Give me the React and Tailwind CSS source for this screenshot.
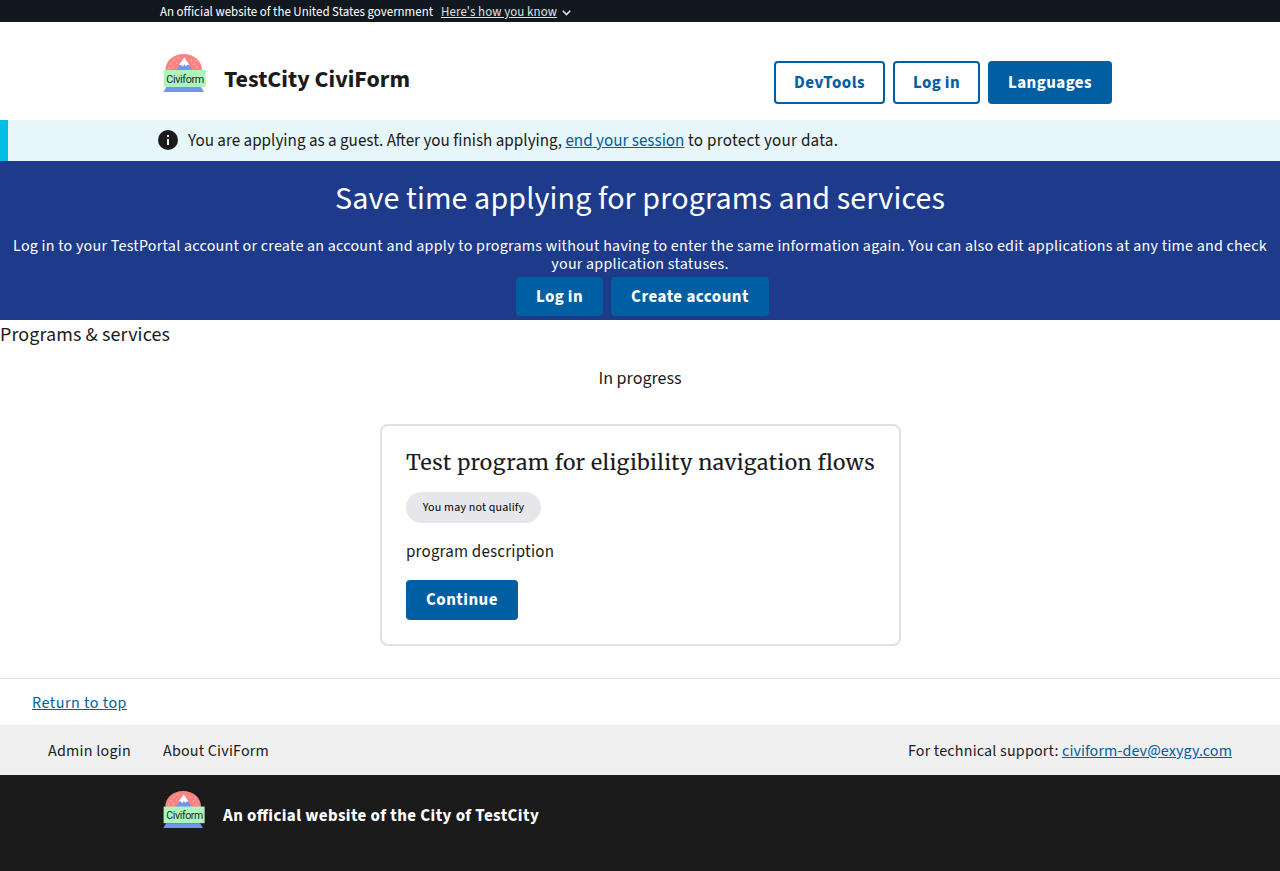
function Logo({ className }) {
  return (
    <svg className={className} viewBox="6 12 138 126" aria-hidden="true">
      <path d="M22 68C22 38 46 18 77 18s55 20 55 50z" fill="#fb8383" />
      <g fill="#fcc5c5">
        <circle cx="48" cy="37" r="2.2" />
        <circle cx="57" cy="46" r="2.2" />
        <circle cx="39" cy="48" r="2.2" />
        <circle cx="46" cy="58" r="2.2" />
        <circle cx="100" cy="37" r="2.2" />
        <circle cx="109" cy="48" r="2.2" />
        <circle cx="115" cy="38" r="2.2" />
        <circle cx="117" cy="58" r="2.2" />
        <circle cx="33" cy="60" r="2.2" />
        <circle cx="62" cy="30" r="2.2" />
      </g>
      <path d="M54 68 79 29l25 39z" fill="#7295f4" />
      <path d="M79 28 63 51l6-1 5 6 5-7 5 6 4-5 6 1z" fill="#fff" />
      <path d="M25 117h104l9 15H16z" fill="#7295f4" />
      <rect x="17" y="66" width="126" height="51" fill="#adf5bd" />
      <text x="25" y="103.5" textLength="114" fontFamily="Roboto, Inter, sans-serif" fontSize="32.5" fill="#1c2a20">
        Civiform
      </text>
    </svg>
  );
}

const solid = "rounded bg-[#005ea2] text-center text-[16.96px] font-bold leading-none text-white";
const outline = "rounded border-2 border-[#005ea2] pt-0.5 text-center text-[16.96px] font-bold leading-none text-[#005ea2]";

function Banner() {
  return (
    <div className="flex h-[22px] items-center bg-[#11181f] pl-40 pt-0.5 text-[12.86px] leading-4 text-white">
      <span className="w-[281px] whitespace-nowrap">An official website of the United States government</span>
      <a href="#" className="whitespace-nowrap text-[#dfe1e2] underline tracking-[0.1px]">Here's how you know</a>
      <svg className="ml-[5px] mt-px h-[6px] w-[9px]" viewBox="0 0 9 6" fill="none" stroke="#dfe1e2" strokeWidth="1.6">
        <path d="m.8.8 3.7 3.7L8.2.8" />
      </svg>
    </div>
  );
}

function Header() {
  return (
    <header className="flex h-[98px] items-start pl-40 pr-[168px]">
      <Logo className="mt-[30px] h-[42px] w-[46px]" />
      <span className="ml-[18px] mt-[42px] grow text-2xl font-bold leading-8 tracking-[0.016px]">TestCity CiviForm</span>
      <nav className="mt-[39px] flex gap-2">
        <button className={outline + " h-[43px] w-[111px] tracking-[0.461px]"}>DevTools</button>
        <button className={outline + " h-[43px] w-[87px] tracking-[0.368px]"}>Log in</button>
        <button className={solid + " h-[43px] w-[124px] pt-0.5 tracking-[0.434px]"}>Languages</button>
      </nav>
    </header>
  );
}

function GuestAlert() {
  return (
    <div className="flex h-[41px] items-start border-l-8 border-[#00bde3] bg-[#e7f6f8] pl-[150px] text-[17.06px] leading-6">
      <svg className="mr-[10px] mt-[10px] h-5 w-5" viewBox="0 0 20 20">
        <circle cx="10" cy="10" r="10" fill="#1b1b1b" />
        <path d="M9 5h2v2H9zM9 9h2v6H9z" fill="#e7f6f8" />
      </svg>
      <p className="mt-[9px] whitespace-nowrap">
        You are applying as a guest. After you finish applying,{" "}
        <a href="#" className="text-[#005ea2] underline">end your session</a>
        <span className="tracking-[0.25px]"> to protect your data.</span>
      </p>
    </div>
  );
}

function Hero() {
  return (
    <section className="flex h-[159px] flex-col items-center bg-[#1e3a8a] text-white">
      <h1 className="mt-[18px] whitespace-nowrap text-[32px] leading-10 tracking-[0.133px]">
        Save time applying for programs and services
      </h1>
      <p className="mt-[18px] text-center text-base leading-[18px] tracking-[0.242px]">
        Log in to your TestPortal account or create an account and apply to programs without having to enter the same
        information again. You can also edit applications at any time and check
        <br />
        your application statuses.
      </p>
      <div className="ml-[5px] mt-1 flex gap-2">
        <button className={solid + " h-[39px] w-[87px] pt-0.5 tracking-[0.368px]"}>Log in</button>
        <button className={solid + " h-[39px] w-[158px] pt-0.5 tracking-[0.488px]"}>Create account</button>
      </div>
    </section>
  );
}

function ProgramCard() {
  return (
    <article className="mx-auto mt-[33px] flex h-[222px] w-[521px] flex-col items-start rounded-lg border-2 border-[#dfe1e2] pl-[24.5px]">
      <h3 className="mt-[22px] whitespace-nowrap font-['Merriweather','Noto_Serif',serif] text-[21.28px] leading-[30px] tracking-[0.4px] [font-feature-settings:'liga'_1]">
        Test program for eligibility navigation flows
      </h3>
      <span className="mt-[14px] flex h-[31px] w-[135px] items-center justify-center rounded-full bg-[#e5e7eb] text-xs tracking-[0.17px] text-black">
        You may not qualify
      </span>
      <p className="mt-[17px] text-[16.96px] leading-6 tracking-[0.2px]">program description</p>
      <button className={solid + " mt-4 h-10 w-28 tracking-[0.465px]"}>Continue</button>
    </article>
  );
}

function Footer() {
  return (
    <footer className="mt-8 border-t border-[#dfe1e2] text-base leading-6">
      <div className="flex h-[46px] items-center pl-8 pt-0.5">
        <a href="#" className="text-[#005ea2] underline tracking-[0.528px]">Return to top</a>
      </div>
      <div className="flex h-[50px] items-center bg-[#f0f0f0] px-12 pt-0.5">
        <span className="w-[115px] tracking-[0.252px]">Admin login</span>
        <span className="grow tracking-[0.202px]">About CiviForm</span>
        <span className="tracking-[0.191px]">
          For technical support:{" "}
          <a href="#" className="text-[#005ea2] underline tracking-[0.097px]">civiform-dev@exygy.com</a>
        </span>
      </div>
      <div className="flex h-24 items-start bg-[#1b1b1b] pl-40 pt-[14px]">
        <Logo className="h-[41px] w-[45px]" />
        <span className="ml-[18px] mt-[15px] text-[16.96px] font-bold leading-6 text-white tracking-[0.42px] [font-feature-settings:'liga'_1]">
          An official website of the City of TestCity
        </span>
      </div>
    </footer>
  );
}

export default function App() {
  return (
    <div className="h-[871px] overflow-hidden bg-white font-['Source_Sans_3','Noto_Sans_CJK_SC',sans-serif] text-[#1b1b1b]">
      <Banner />
      <Header />
      <GuestAlert />
      <Hero />
      <main>
        <h2 className="pt-px text-xl leading-7 tracking-[0.123px]">Programs &amp; services</h2>
        <h3 className="mt-[18px] text-center text-lg leading-6">In progress</h3>
        <ProgramCard />
      </main>
      <Footer />
    </div>
  );
}
